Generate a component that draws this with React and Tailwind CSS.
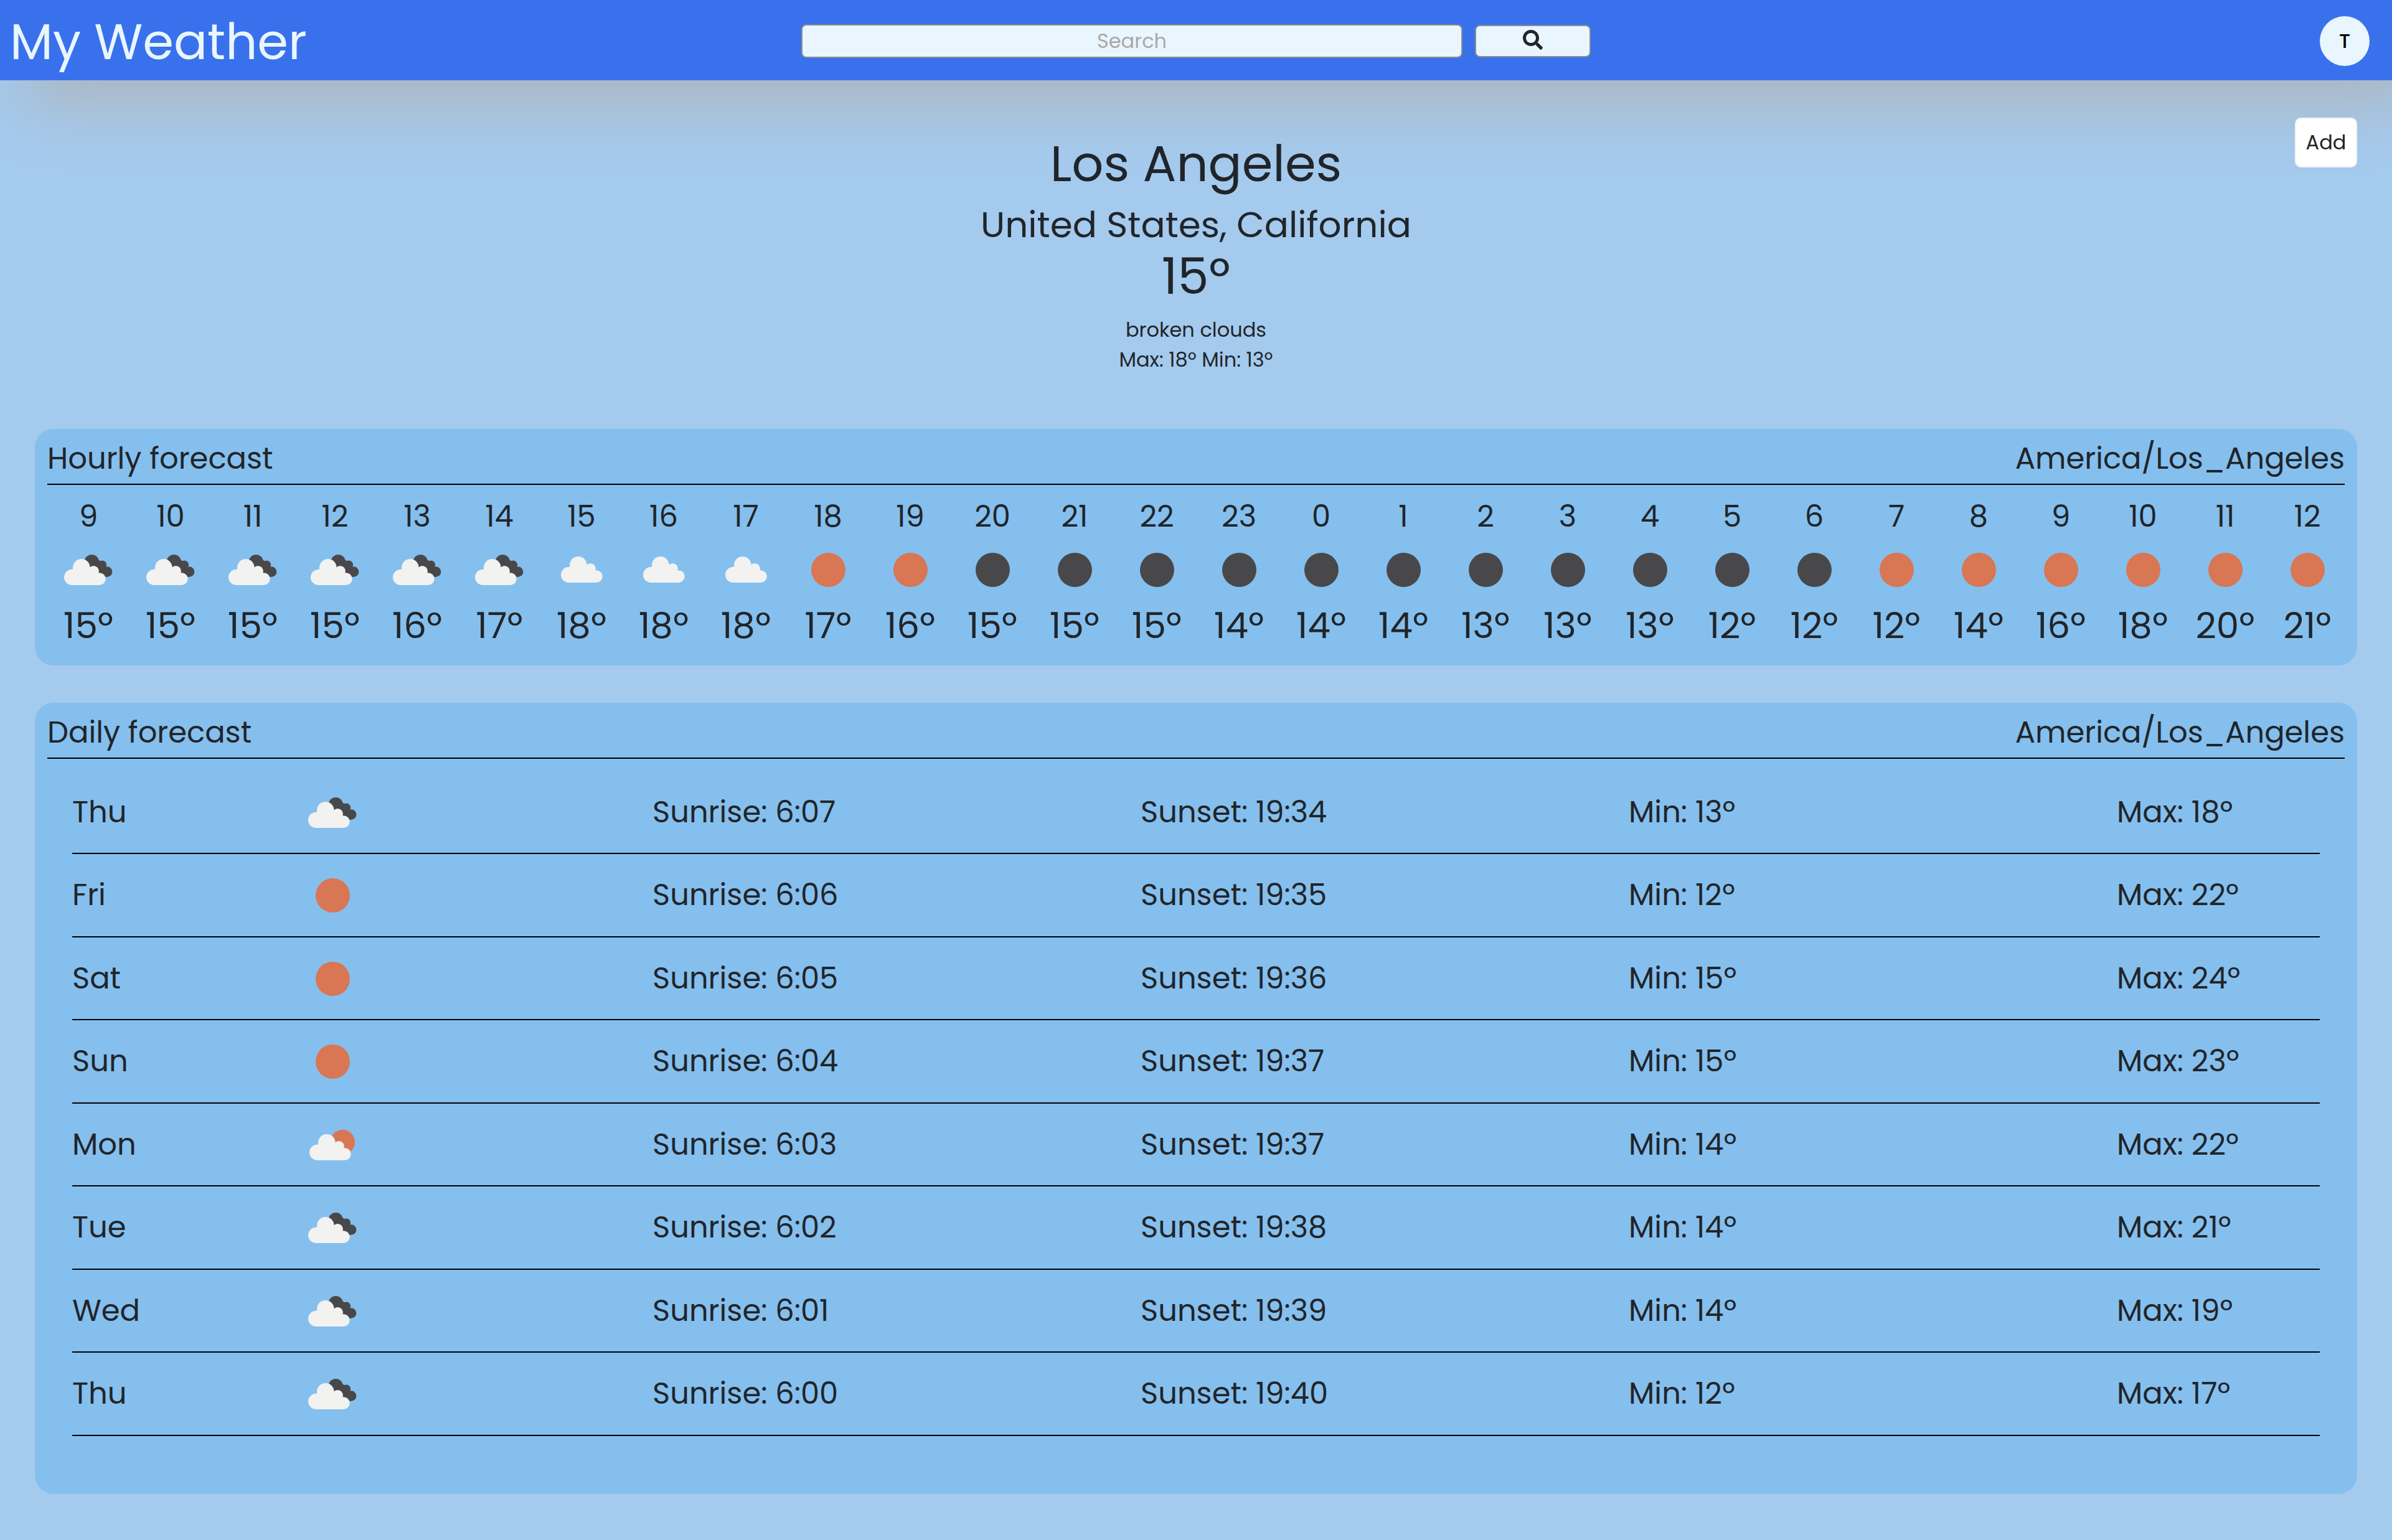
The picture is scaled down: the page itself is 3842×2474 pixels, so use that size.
import { FaSearch } from "react-icons/fa";

const hours = [
  [9, "broken", 15], [10, "broken", 15], [11, "broken", 15], [12, "broken", 15],
  [13, "broken", 16], [14, "broken", 17], [15, "cloud", 18], [16, "cloud", 18],
  [17, "cloud", 18], [18, "sun", 17], [19, "sun", 16], [20, "moon", 15],
  [21, "moon", 15], [22, "moon", 15], [23, "moon", 14], [0, "moon", 14],
  [1, "moon", 14], [2, "moon", 13], [3, "moon", 13], [4, "moon", 13],
  [5, "moon", 12], [6, "moon", 12], [7, "sun", 12], [8, "sun", 14],
  [9, "sun", 16], [10, "sun", 18], [11, "sun", 20], [12, "sun", 21],
];

const days = [
  ["Thu", "broken", "6:07", "19:34", 13, 18],
  ["Fri", "sun", "6:06", "19:35", 12, 22],
  ["Sat", "sun", "6:05", "19:36", 15, 24],
  ["Sun", "sun", "6:04", "19:37", 15, 23],
  ["Mon", "few", "6:03", "19:37", 14, 22],
  ["Tue", "broken", "6:02", "19:38", 14, 21],
  ["Wed", "broken", "6:01", "19:39", 14, 19],
  ["Thu", "broken", "6:00", "19:40", 12, 17],
];

const labels = {
  broken: "broken clouds",
  cloud: "scattered clouds",
  few: "few clouds",
  sun: "clear sky",
  moon: "clear night",
};

function WhiteCloud({ transform }) {
  return (
    <g fill="#f2f2f0" transform={transform}>
      <circle cx="23.6" cy="62.4" r="12.6" />
      <circle cx="38.8" cy="46.8" r="13.8" />
      <circle cx="58.3" cy="52.6" r="8.6" />
      <circle cx="67.8" cy="65.1" r="9.9" />
      <path d="M23.6 75V49.8L38 46l20 6 9.8 4V75Z" />
    </g>
  );
}

function WeatherIcon({ kind }) {
  return (
    <svg viewBox="0 0 100 100" className="block size-[100px]" role="img" aria-label={labels[kind]}>
      {kind === "sun" && <circle cx="50.5" cy="50.5" r="27.5" fill="#d97653" />}
      {kind === "moon" && <circle cx="50.5" cy="50.5" r="27.5" fill="#48484a" />}
      {kind === "cloud" && <WhiteCloud transform="translate(6 -4)" />}
      {kind === "few" && (
        <>
          <circle cx="66.3" cy="45.7" r="19.7" fill="#d97653" />
          <WhiteCloud transform="translate(2 0)" />
        </>
      )}
      {kind === "broken" && (
        <>
          <g fill="#48484a">
            <circle cx="55.3" cy="37.5" r="11.5" />
            <circle cx="72.2" cy="42.5" r="6.9" />
            <circle cx="80.1" cy="53.5" r="8.3" />
            <path d="M55 26.500L64 33l8 5 8 12v11.700H64L50 48Z" />
          </g>
          <WhiteCloud />
        </>
      )}
    </svg>
  );
}

function Card({ title, className, children }) {
  return (
    <section className={`rounded-[30px] bg-[#85bfee] px-5 pt-3 ${className}`}>
      <div className="flex justify-between border-b-2 border-black pb-1 text-[48px] leading-[72px]">
        <h2>{title}</h2>
        <p>America/Los_Angeles</p>
      </div>
      {children}
    </section>
  );
}

export default function App() {
  return (
    <div className="min-h-screen bg-[#a4caee] font-[Poppins,Inter,sans-serif] text-[32px] leading-[48px] text-[#212529]">
      <header className="grid h-[129px] grid-cols-[1fr_33%_1fr] items-center bg-[#3971ed] pt-[3px] shadow-[40px_40px_100px_#adb5bd]">
        <h1 className="pt-[2px] pl-4 text-[80px] leading-[96px] text-[#e9f6ff]">My Weather</h1>
        <form className="flex items-center gap-5" onSubmit={(e) => e.preventDefault()}>
          <input
            type="text"
            aria-label="Search"
            placeholder="Search"
            className="h-[54px] min-w-0 flex-1 rounded-[8px] border-2 border-[#8c8c8c] bg-[#e9f6ff] text-center placeholder:text-[#a9a9a9]"
          />
          <button
            type="submit"
            aria-label="Search"
            className="flex h-[52px] w-[186px] items-center justify-center rounded-[8px] border-2 border-[#8c8c8c] bg-[#e9f6ff] pb-1"
          >
            <FaSearch className="size-8" />
          </button>
        </form>
        <button className="mr-9 size-20 justify-self-end rounded-full bg-[#e9f6ff] font-medium text-black">T</button>
      </header>

      <main className="px-14 pb-[75px]">
        <div className="grid grid-cols-[1fr_auto_1fr] pb-[87px]">
          <div className="col-start-2 pt-[86px] text-center">
            <h2 className="text-[80px] leading-[96px]">Los Angeles</h2>
            <h3 className="mt-[15px] text-[58px] leading-[70px]">United States, California</h3>
            <p className="text-[80px] leading-[96px]">15º</p>
            <p className="mt-[14px]">broken clouds</p>
            <p>Max: 18º Min: 13º</p>
          </div>
          <button className="mt-[60px] h-20 w-[100px] justify-self-end rounded-[10px] border-2 border-[#f5f5f5] bg-white">
            Add
          </button>
        </div>

        <Card title="Hourly forecast" className="pb-[31px]">
          <ul className="-mr-[6px] grid grid-cols-28 pt-[22px]">
            {hours.map(([hour, kind, temp], i) => (
              <li key={i} className="flex flex-col items-center">
                <p className="text-[48px] leading-[58px]">{hour}</p>
                <div className="my-[6px]">
                  <WeatherIcon kind={kind} />
                </div>
                <p className="text-[58px] leading-[67px]">{temp}º</p>
              </li>
            ))}
          </ul>
        </Card>

        <Card title="Daily forecast" className="mt-[60px] pb-[93px]">
          <div className="px-10 pt-5">
            <table className="h-[1068px] w-full table-fixed border-collapse text-left text-[48px]">
              <colgroup>
                <col className="w-[368px]" />
                <col className="w-[564px]" />
                <col className="w-[784px]" />
                <col className="w-[784px]" />
                <col className="w-[784px]" />
                <col />
              </colgroup>
              <tbody>
                {days.map(([day, kind, sunrise, sunset, min, max], i) => (
                  <tr key={i} className="border-b-2 border-black">
                    <th scope="row" className="font-normal">{day}</th>
                    <td>
                      <WeatherIcon kind={kind} />
                    </td>
                    <td>Sunrise: {sunrise}</td>
                    <td>Sunset: {sunset}</td>
                    <td>Min: {min}º</td>
                    <td>Max: {max}º</td>
                  </tr>
                ))}
              </tbody>
            </table>
          </div>
        </Card>
      </main>
    </div>
  );
}
